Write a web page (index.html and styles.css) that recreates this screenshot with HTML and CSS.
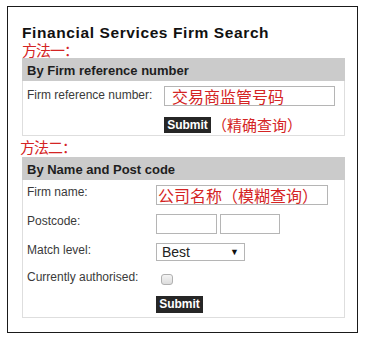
FILE: index.html
```html
<!DOCTYPE html>
<html>
<head>
<meta charset="utf-8">
<link rel="stylesheet" href="styles.css">
</head>
<body>
<div class="frame">
  <h1 class="title">Financial Services Firm Search</h1>
  <div class="note">方法一：</div>
  <div class="section">
    <div class="sec-head">By Firm reference number</div>
    <div class="sec-body ref-body">
      <div class="ref-row">
        <span class="label ref-label">Firm reference number:</span>
        <div class="input ref-input"><span class="hint">交易商监管号码</span></div>
      </div>
      <div class="ref-row submit-row">
        <span class="btn">Submit</span><span class="hint2">（精确查询）</span>
      </div>
    </div>
  </div>
  <div class="note note2">方法二：</div>
  <div class="section">
    <div class="sec-head">By Name and Post code</div>
    <div class="sec-body name-body">
      <div class="row r1">
        <span class="label">Firm name:</span>
        <div class="input name-input"><span class="hint">公司名称（模糊查询）</span></div>
      </div>
      <div class="row r2">
        <span class="label">Postcode:</span>
        <div class="pc">
          <div class="input pc1"></div>
          <div class="input pc2"></div>
        </div>
      </div>
      <div class="row r3">
        <span class="label">Match level:</span>
        <div class="select"><span class="sel-text">Best</span><span class="arrow">▼</span></div>
      </div>
      <div class="row r4">
        <span class="label">Currently authorised:</span>
        <span class="check"></span>
      </div>
      <div class="row r5">
        <span class="label"></span>
        <span class="btn">Submit</span>
      </div>
    </div>
  </div>
</div>
</body>
</html>
```

FILE: styles.css
```css
* { box-sizing: border-box; }
html, body { margin: 0; padding: 0; background: #fff; }
body { font-family: "Liberation Sans", Arial, sans-serif; }

.frame {
  margin: 6px 0 0 7px;
  width: 351px;
  height: 327px;
  border: 1px solid #1a1a1a;
  padding: 17px 12px 0 14px;
}

.title {
  margin: 0;
  font-size: 15.5px;
  letter-spacing: 0.6px;
  line-height: 17px;
  height: 17px;
  font-weight: bold;
  color: #111;
  white-space: nowrap;
}

.note {
  font-family: "Noto Sans CJK SC", "Liberation Sans", sans-serif;
  color: #d42424;
  font-size: 15px;
  line-height: 17px;
  height: 17px;
  letter-spacing: -1px;
}
.note2 {
  height: 21px;
  line-height: 21px;
  margin-left: -2px;
}

.section { width: 323px; }

.sec-head {
  background: #cbcbcb;
  height: 23px;
  line-height: 23px;
  padding: 1px 0 0 5px;
  font-size: 13px;
  font-weight: bold;
  color: #1e1e1e;
}

.sec-body {
  border: 1px solid #dedede;
  border-top: none;
  padding: 5px 9px 0 4px;
}

.label {
  font-size: 12px;
  line-height: 14px;
  color: #3a3a3a;
}

.ref-body { height: 55px; }
.ref-row { display: flex; align-items: flex-start; }
.ref-label { width: 137px; padding-top: 2px; }
.submit-row { margin-top: 10px; padding-left: 137px; align-items: center; }

.input {
  border: 1px solid #b5b5b5;
  background: #fff;
  height: 20px;
}
.ref-input { width: 171px; }
.hint {
  display: block;
  font-family: "Noto Sans CJK SC", sans-serif;
  color: #d42424;
  font-size: 16px;
  line-height: 18px;
  padding-left: 7px;
  white-space: nowrap;
}
.name-input { width: 172px; }
.name-input .hint { padding-left: 1px; letter-spacing: 0; }

.btn {
  display: inline-block;
  background: #262626;
  color: #fff;
  font-weight: bold;
  font-size: 12px;
  height: 16px;
  line-height: 16px;
  padding: 0 3px;
  width: 47px;
  text-align: center;
}
.hint2 {
  font-family: "Noto Sans CJK SC", sans-serif;
  color: #d42424;
  font-size: 15px;
  line-height: 17px;
  margin-left: 1px;
}

.name-body { height: 138px; }
.row { display: flex; align-items: flex-start; }
.row .label:first-child { width: 129px; flex: none; }
.r1 { height: 20px; }
.r2 { height: 20px; margin-top: 9px; }
.r3 { height: 18px; margin-top: 9px; }
.r4 { height: 22px; margin-top: 7px; padding-top: 2px; }
.r5 { height: 17px; margin-top: 6px; }
.r5 .btn { height: 17px; line-height: 17px; }

.pc { display: flex; gap: 3px; }
.pc1 { width: 61px; }
.pc2 { width: 60px; }

.select {
  width: 89px;
  height: 18px;
  border: 1px solid #b5b5b5;
  display: flex;
  align-items: center;
  justify-content: space-between;
  padding: 0 5px 0 5px;
}
.sel-text { font-size: 14px; color: #222; line-height: 16px; }
.arrow { font-size: 9px; color: #111; line-height: 10px; }

.check {
  display: inline-block;
  width: 12px;
  height: 11px;
  margin: 4px 0 0 5px;
  border: 1px solid #b0b0b0;
  border-radius: 3px;
  background: linear-gradient(#f4f4f4, #dcdcdc);
}
```
